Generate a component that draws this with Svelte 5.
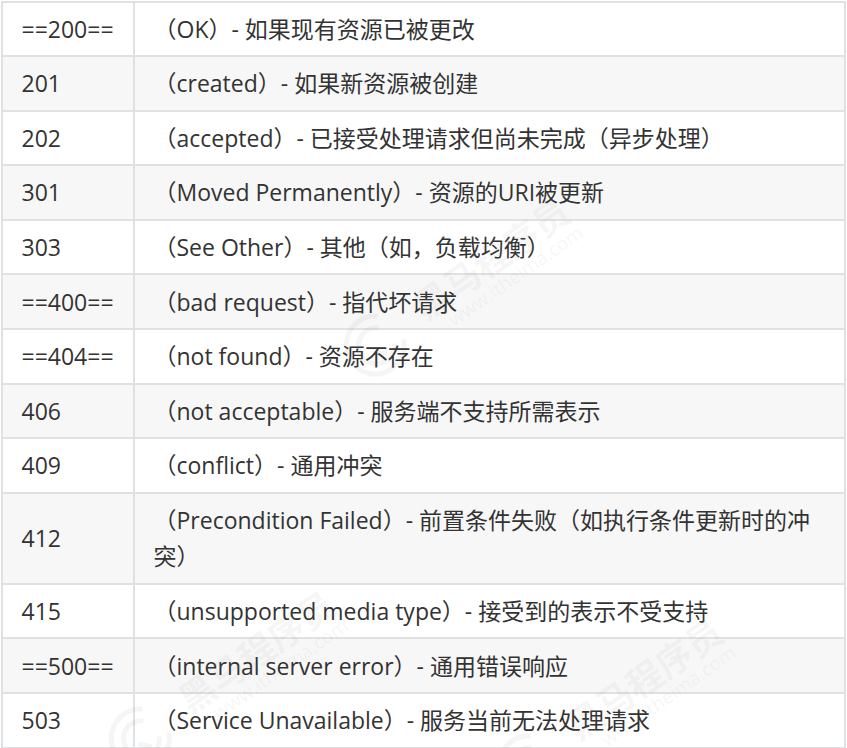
<script>
  const rows = [
    ['==200==', '（OK）- 如果现有资源已被更改'],
    ['201', '（created）- 如果新资源被创建'],
    ['202', '（accepted）- 已接受处理请求但尚未完成（异步处理）'],
    ['301', '（Moved Permanently）- 资源的URI被更新'],
    ['303', '（See Other）- 其他（如，负载均衡）'],
    ['==400==', '（bad request）- 指代坏请求'],
    ['==404==', '（not found）- 资源不存在'],
    ['406', '（not acceptable）- 服务端不支持所需表示'],
    ['409', '（conflict）- 通用冲突'],
    ['412', '（Precondition Failed）- 前置条件失败（如执行条件更新时的冲突）'],
    ['415', '（unsupported media type）- 接受到的表示不受支持'],
    ['==500==', '（internal server error）- 通用错误响应'],
    ['503', '（Service Unavailable）- 服务当前无法处理请求']
  ];
  const marks = [
    { x: 490, y: 257 },
    { x: 255, y: 650 },
    { x: 643, y: 677 }
  ];
</script>

<div class="page">
  <table>
    <tbody>
      {#each rows as row}
        <tr>
          <td class="code">{row[0]}</td>
          <td class="desc">{row[1]}</td>
        </tr>
      {/each}
    </tbody>
  </table>
  {#each marks as m}
    <div class="mark" style="left:{m.x}px;top:{m.y}px">
      <svg class="logo" viewBox="0 0 64 64" width="64" height="64" aria-hidden="true">
        <path d="M50 10A29 29 0 1 0 58 44" />
        <path d="M44 20A18 18 0 1 0 48 42" />
        <path d="M26 36l10 10" />
      </svg>
      <div class="cn">黑马程序员</div>
      <div class="en">www.itheima.com</div>
    </div>
  {/each}
</div>

<style>
  :global(body) {
    margin: 0;
    background: #fff;
  }
  .page {
    position: relative;
    width: 847px;
    height: 748px;
    overflow: hidden;
  }
  table {
    width: 845px;
    border-collapse: collapse;
    table-layout: fixed;
    margin-top: 0.5px;
    margin-left: 1px;
    font-family: "Open Sans", "Noto Sans CJK SC", sans-serif;
    font-size: 23px;
    line-height: 36.4px;
    color: #333;
  }
  tr:nth-child(even) {
    background: #f7f7f7;
  }
  td {
    border: 2px solid #dfe2e5;
    padding: 8.1px 18.5px;
  }
  .code {
    width: 93px;
  }
  .mark {
    position: absolute;
    width: 0;
    height: 0;
    transform: rotate(-35deg);
    pointer-events: none;
    color: rgba(120, 120, 120, 0.07);
  }
  .cn,
  .en {
    position: absolute;
    white-space: nowrap;
  }
  .cn {
    transform: translate(-50%, -50%);
    font-family: "Noto Sans CJK SC", sans-serif;
    font-weight: 700;
    font-size: 36px;
    line-height: 36px;
  }
  .en {
    left: 10px;
    top: 30px;
    transform: translate(-50%, -50%);
    font-family: "Open Sans", sans-serif;
    font-size: 19px;
    line-height: 24px;
  }
  .logo {
    position: absolute;
    left: -176px;
    top: -26px;
    fill: none;
    stroke: currentColor;
    stroke-width: 5;
  }
</style>
